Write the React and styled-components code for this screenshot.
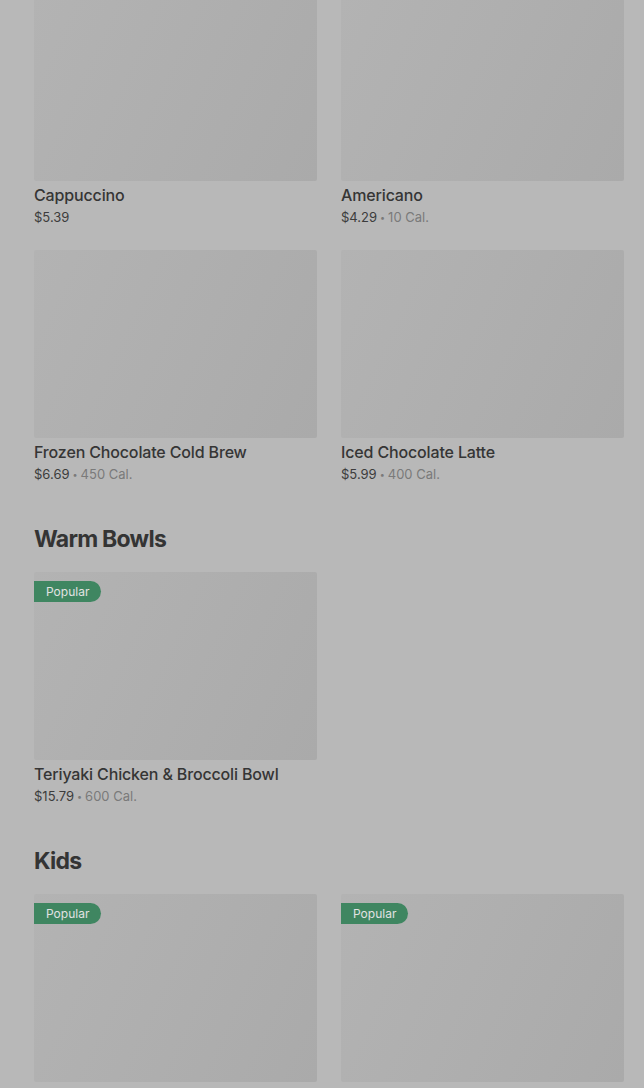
import React from "react";
import styled, { createGlobalStyle } from "styled-components";

const Global = createGlobalStyle`
  html, body { margin: 0; padding: 0; background: #b8b8b8; }
  body { font-family: Inter, "Liberation Sans", sans-serif; overflow: hidden; }
  * { box-sizing: border-box; }
`;

const Page = styled.main`
  padding: 0 20px 0 34px;
  display: flex;
  flex-direction: column;
  gap: 38px;
  margin-top: -7px;
`;

const Section = styled.section`
  display: flex;
  flex-direction: column;
  gap: 17px;
`;

const Heading = styled.h2`
  margin: 0;
  font-size: 23px;
  line-height: 32px;
  font-weight: 700;
  color: #343434;
  letter-spacing: -0.75px;
`;

const Grid = styled.div`
  display: grid;
  grid-template-columns: 283px 283px;
  column-gap: 24px;
  row-gap: 22px;
`;

const Card = styled.article`
  display: flex;
  flex-direction: column;
`;

const Thumb = styled.div`
  position: relative;
  height: 188px;
  background: linear-gradient(115deg, #b3b3b3 0%, #afafaf 45%, #aaaaaa 100%);
  border-radius: 2px;
`;

const Badge = styled.span`
  position: absolute;
  top: 9px;
  left: 0;
  height: 21px;
  padding: 0 12px;
  display: flex;
  align-items: center;
  background: #3f8661;
  color: #e2e2e2;
  font-size: 12px;
  border-radius: 0 11px 11px 0;
`;

const Title = styled.h3`
  margin: 3px 0 0;
  font-size: 16px;
  line-height: 22px;
  font-weight: 500;
  color: #353535;
  letter-spacing: -0.15px;
`;

const Meta = styled.div`
  display: flex;
  align-items: center;
  height: 22px;
  font-size: 13px;
  line-height: 22px;
  color: #3c3c3c;
`;

const Cal = styled.span`
  color: #7a7a7a;
`;

const Dot = styled.span`
  color: #7a7a7a;
  margin: 0 3px;
  font-size: 9px;
  line-height: 1;
`;

function Item({ name, price, cal, popular }) {
  return (
    <Card>
      <Thumb>{popular && <Badge>Popular</Badge>}</Thumb>
      <Title>{name}</Title>
      <Meta>
        {price}
        {cal && (
          <>
            <Dot>•</Dot>
            <Cal>{cal}</Cal>
          </>
        )}
      </Meta>
    </Card>
  );
}

export default function App() {
  return (
    <>
      <Global />
      <Page>
        <Grid>
          <Item name="Cappuccino" price="$5.39" />
          <Item name="Americano" price="$4.29" cal="10 Cal." />
          <Item name="Frozen Chocolate Cold Brew" price="$6.69" cal="450 Cal." />
          <Item name="Iced Chocolate Latte" price="$5.99" cal="400 Cal." />
        </Grid>
        <Section>
          <Heading>Warm Bowls</Heading>
          <Grid>
            <Item name="Teriyaki Chicken & Broccoli Bowl" price="$15.79" cal="600 Cal." popular />
          </Grid>
        </Section>
        <Section>
          <Heading>Kids</Heading>
          <Grid>
            <Item name="Kids Meal" price="$6.99" popular />
            <Item name="Kids Snack" price="$4.99" popular />
          </Grid>
        </Section>
      </Page>
    </>
  );
}
